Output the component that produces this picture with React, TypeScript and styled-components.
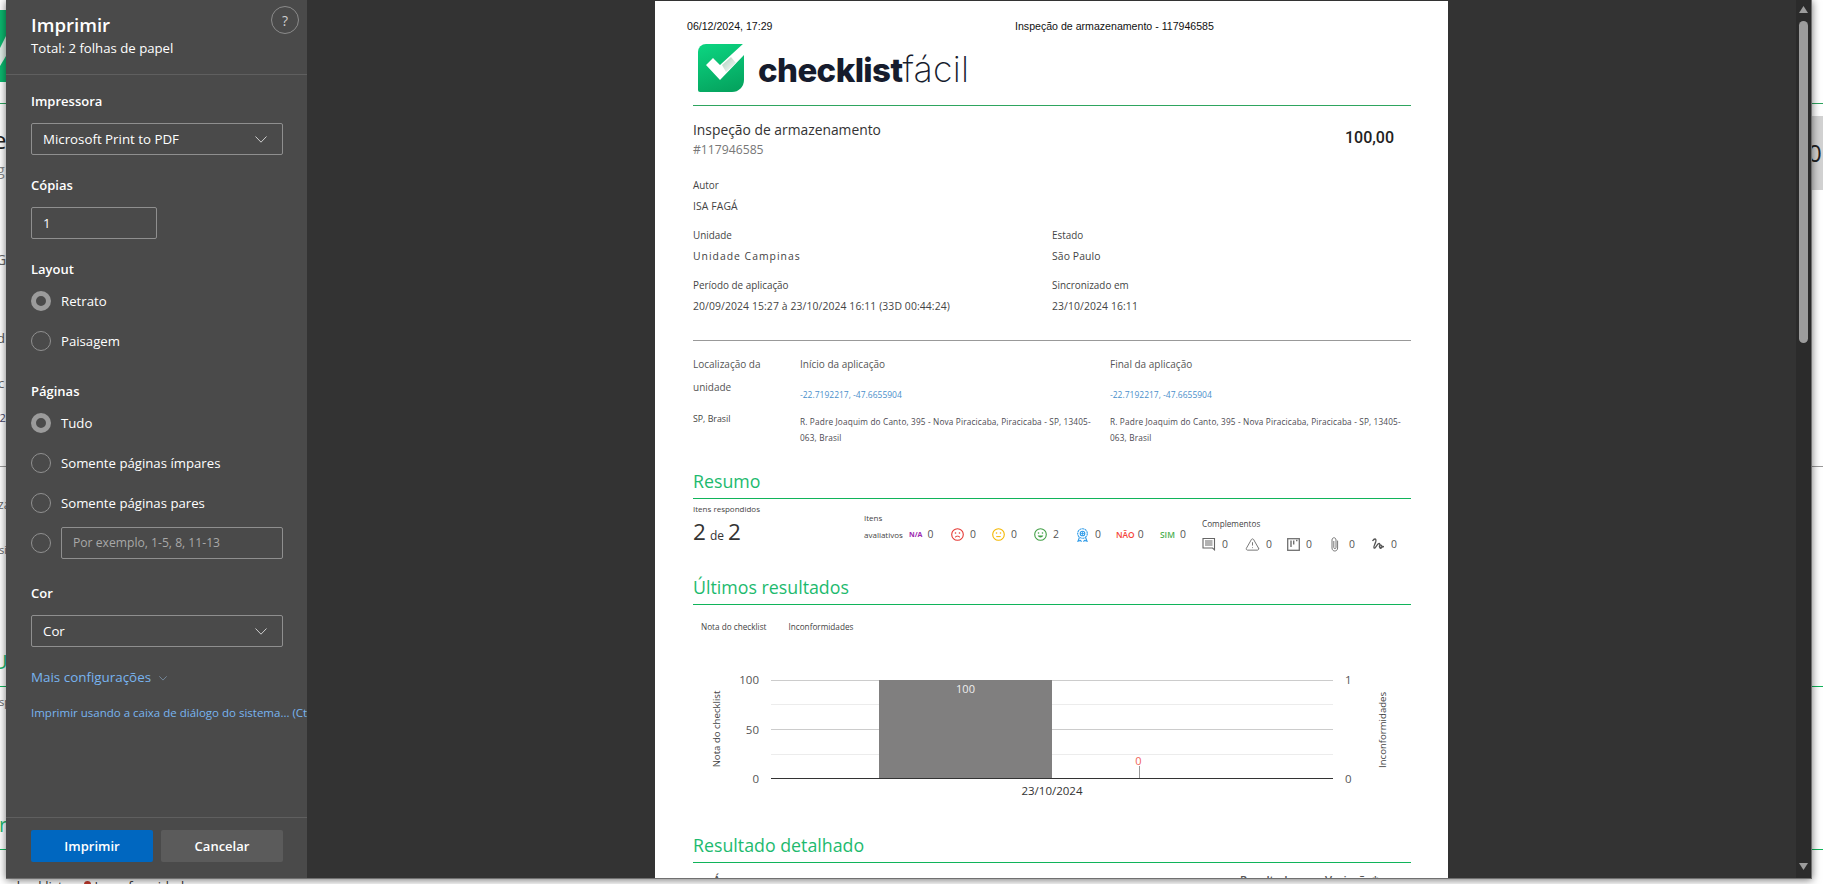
import React from "react";
import styled, { createGlobalStyle } from "styled-components";
import { TriangleAlert } from "lucide-react";

const Global = createGlobalStyle`
  html, body { margin: 0; padding: 0; background: #fff; overflow: hidden; }
  * { box-sizing: border-box; }
`;

const Root = styled.div`
  position: relative;
  width: 1823px;
  height: 884px;
  overflow: hidden;
  background: #fff;
  font-family: "Open Sans", "Liberation Sans", sans-serif;
`;

/* page behind the modal */
const BackTop = styled.div`
  display: flex;
  justify-content: space-between;
  height: 878px;
`;
const BackLeft = styled.div`
  width: 6px;
  overflow: hidden;
`;
const BackRight = styled.div`
  width: 11px;
  overflow: hidden;
`;
const BackRule = styled.div<{ $mt: number; $c: string }>`
  height: 1px;
  margin-top: ${(p) => p.$mt}px;
  background: ${(p) => p.$c};
`;
const Scrap = styled.div<{ $mt: number; $lh: number; $size: number; $c: string; $indent: number }>`
  margin-top: ${(p) => p.$mt}px;
  height: ${(p) => p.$lh}px;
  line-height: ${(p) => p.$lh}px;
  font-size: ${(p) => p.$size}px;
  color: ${(p) => p.$c};
  text-indent: ${(p) => p.$indent}px;
  white-space: nowrap;
`;
const LogoBit = styled.svg`
  display: block;
  margin-top: 10px;
`;
const GrayCard = styled.div`
  margin-top: 12px;
  height: 74px;
  background: #d2d2d2;
  color: #222;
  font-size: 24px;
  line-height: 74px;
  text-indent: -4px;
  white-space: nowrap;
`;
const BackBottom = styled.div`
  display: flex;
  align-items: flex-start;
  height: 6px;
  overflow: hidden;
  font-size: 13px;
  line-height: 16px;
  color: #333;
  white-space: nowrap;
`;
const BackLegendLead = styled.span`
  margin-left: -8px;
`;
const BackLegendDot = styled.span`
  width: 7px;
  height: 7px;
  border-radius: 50%;
  background: #c0392b;
  margin: 3px 4px 0 21px;
`;

/* dialog */
const Dialog = styled.div`
  position: absolute;
  left: 6px;
  top: 0;
  width: 1806px;
  height: 879px;
  display: flex;
  border-right: 1px solid #707070;
  border-bottom: 1px solid #707070;
  box-shadow: 0 1px 8px rgba(0, 0, 0, 0.55);
  color: #fff;
`;
const Sidebar = styled.aside`
  width: 301px;
  flex: none;
  display: flex;
  flex-direction: column;
  background: #4a4a4a;
  font-size: 13.2px;
  overflow: hidden;
`;
const SideHeader = styled.header`
  height: 75px;
  flex: none;
  display: flex;
  justify-content: space-between;
  align-items: flex-start;
  padding: 6px 8px 0 25px;
  border-bottom: 1px solid #5f5f5f;
`;
const SideTitle = styled.h1`
  margin: 5px 0 0;
  font-size: 18.6px;
  line-height: 28px;
  font-weight: 600;
`;
const SideSub = styled.div`
  margin-top: -1px;
  font-size: 13.2px;
  line-height: 20px;
`;
const HelpBtn = styled.div`
  width: 28px;
  height: 28px;
  border-radius: 50%;
  border: 1px solid #8b8b8b;
  display: flex;
  align-items: center;
  justify-content: center;
  color: #cfcfcf;
  font-size: 14px;
`;
const SideBody = styled.div`
  flex: 1;
  display: flex;
  flex-direction: column;
  padding: 0 24px 0 25px;
`;
const GroupLabel = styled.div<{ $mt: number }>`
  margin-top: ${(p) => p.$mt}px;
  font-weight: 600;
  font-size: 13px;
  line-height: 20px;
`;
const Select = styled.div`
  margin-top: 12px;
  height: 32px;
  border: 1px solid #8f8f8f;
  border-radius: 2px;
  display: flex;
  align-items: center;
  justify-content: space-between;
  padding: 0 15px 0 11px;
  line-height: 30px;
  font-size: 13.3px;
`;
const CopyBox = styled.div`
  margin-top: 12px;
  width: 126px;
  height: 32px;
  border: 1px solid #8f8f8f;
  border-radius: 2px;
  padding-left: 11px;
  line-height: 30px;
`;
const RadioRow = styled.div<{ $mt?: number }>`
  height: 40px;
  margin-top: ${(p) => p.$mt ?? 0}px;
  display: flex;
  align-items: center;
  gap: 10px;
`;
const Radio = styled.span<{ $on?: boolean }>`
  width: 20px;
  height: 20px;
  flex: none;
  border-radius: 50%;
  border: ${(p) => (p.$on ? "5px solid #9b9b9b" : "1px solid #909090")};
`;
const RangeBox = styled.div`
  flex: 1;
  height: 32px;
  border: 1px solid #8f8f8f;
  border-radius: 2px;
  padding-left: 11px;
  line-height: 30px;
  font-size: 12.15px;
  color: #a8a8a8;
`;
const MoreLink = styled.div`
  margin-top: 20px;
  height: 20px;
  display: flex;
  align-items: center;
  gap: 8px;
  color: #78b4f0;
  line-height: 20px;
  font-size: 13.4px;
`;
const MoreChevron = styled.span`
  display: flex;
  margin-top: 3px;
`;
const SysLink = styled.div`
  margin-top: 16px;
  margin-right: -24px;
  line-height: 20px;
  font-size: 11.5px;
  color: #78b4f0;
  white-space: nowrap;
`;
const SideFooter = styled.footer`
  height: 61px;
  flex: none;
  display: flex;
  gap: 8px;
  padding: 12px 24px 0 25px;
  border-top: 1px solid #5f5f5f;
`;
const Btn = styled.div<{ $primary?: boolean }>`
  width: 122px;
  height: 32px;
  border-radius: 2px;
  background: ${(p) => (p.$primary ? "#0067c0" : "#5b5b5b")};
  display: flex;
  align-items: center;
  justify-content: center;
  font-weight: 600;
  font-size: 13px;
`;

const Preview = styled.main`
  width: 1489px;
  flex: none;
  background: #333;
  display: flex;
  justify-content: center;
  overflow: hidden;
`;
const Scrollbar = styled.div`
  flex: 1;
  background: #2b2b2b;
  display: flex;
  flex-direction: column;
  align-items: center;
  padding: 6px 0;
`;
const ScrollThumb = styled.div`
  width: 9px;
  height: 322px;
  margin-top: 8px;
  border-radius: 5px;
  background: #9c9c9c;
`;
const ScrollArrowDown = styled.svg`
  margin-top: auto;
  margin-bottom: 2px;
`;

/* printed sheet */
const Paper = styled.article`
  width: 793px;
  height: 877px;
  margin-top: 1px;
  padding: 0 37px 0 38px;
  background: #fff;
  color: #333;
  overflow: hidden;
  font-family: "Open Sans", "Liberation Sans", sans-serif;
`;
const PrintHeader = styled.div`
  margin: 18px 0 0 -6px;
  height: 14px;
  display: grid;
  grid-template-columns: 328px 1fr;
  font-family: "Liberation Sans", Arial, sans-serif;
  font-size: 10.6px;
  line-height: 14px;
  color: #111;
`;
const LogoRow = styled.div`
  margin: 11px 0 0 5px;
  height: 48px;
  display: flex;
  align-items: center;
  gap: 14px;
`;
const LogoWord = styled.div`
  font-family: Inter, "Open Sans", sans-serif;
  font-size: 33px;
  line-height: 48px;
  letter-spacing: -0.6px;
  color: #161c2d;
  font-weight: 800;
  padding-top: 2px;
  span {
    font-size: 35.8px;
    font-weight: 200;
    letter-spacing: 0.2px;
  }
`;
const Rule = styled.div<{ $mt: number; $c: string }>`
  height: 1px;
  margin-top: ${(p) => p.$mt}px;
  background: ${(p) => p.$c};
`;
const TitleRow = styled.div`
  margin-top: 14px;
  height: 39px;
  display: flex;
  justify-content: space-between;
  padding-right: 17px;
`;
const DocTitle = styled.div`
  font-size: 13.85px;
  line-height: 20px;
  color: #333;
`;
const DocId = styled.div`
  margin-top: 1px;
  font-size: 12.2px;
  line-height: 18px;
  color: #777;
`;
const Score = styled.div`
  margin-top: 8px;
  font-family: Roboto, Arial, sans-serif;
  font-size: 16px;
  font-weight: 500;
  line-height: 20px;
  color: #222;
`;
const Fields = styled.div`
  margin-top: 18px;
  display: grid;
  grid-template-columns: 359px 1fr;
  row-gap: 13px;
`;
const Field = styled.div<{ $full?: boolean }>`
  grid-column: ${(p) => (p.$full ? "1 / -1" : "auto")};
  display: flex;
  flex-direction: column;
  gap: 5px;
  font-size: 9.9px;
  line-height: 16px;
  color: #444;
`;
const FieldValue = styled.span<{ $track?: number }>`
  font-size: 10.4px;
  letter-spacing: ${(p) => p.$track ?? 0.1}px;
`;
const LocGrid = styled.div`
  margin-top: 12px;
  height: 93px;
  display: grid;
  grid-template-columns: 107px 310px 1fr;
`;
const LocHead = styled.div`
  font-size: 10px;
  line-height: 23px;
  color: #555;
`;
const LocSmall = styled.div`
  margin-top: 14px;
  font-size: 8.8px;
  line-height: 12px;
  color: #444;
`;
const Coord = styled.div`
  margin-top: 13px;
  font-size: 8.5px;
  line-height: 12px;
  color: #4a8fcb;
`;
const Addr = styled.div`
  margin-top: 13px;
  width: 300px;
  font-size: 8.25px;
  line-height: 16px;
  letter-spacing: 0.15px;
  color: #4c4a52;
`;
const SectionTitle = styled.h2<{ $mt: number }>`
  margin: ${(p) => p.$mt}px 0 0;
  height: 31px;
  padding-bottom: 4px;
  font-size: 17.8px;
  font-weight: 400;
  line-height: 26px;
  color: #1dba6e;
  border-bottom: 1px solid #10b45a;
`;
const SummaryRow = styled.div`
  height: 75px;
  display: grid;
  grid-template-columns: 171px 338px 1fr;
`;
const Tiny = styled.div<{ $mt?: number }>`
  margin-top: ${(p) => p.$mt ?? 0}px;
  font-size: 8px;
  line-height: 12px;
  color: #444;
`;
const Counts = styled.div`
  margin-top: 2px;
  height: 30px;
  line-height: 30px;
  font-size: 12px;
  color: #333;
  b {
    font-weight: 400;
    font-size: 22.5px;
  }
  span {
    margin: 0 4px;
  }
`;
const EvalCol = styled.div`
  padding-top: 11px;
  font-size: 8px;
  line-height: 15px;
  color: #444;
`;
const EvalLine = styled.div`
  display: flex;
  align-items: center;
  height: 15px;
  margin-top: 2px;
`;
const EvalLabel = styled.span`
  width: 45px;
  flex: none;
`;
const Metric = styled.div<{ $w: number; $gap?: number }>`
  width: ${(p) => p.$w}px;
  flex: none;
  display: flex;
  align-items: center;
  gap: ${(p) => p.$gap ?? 6}px;
  font-size: 10.4px;
  color: #555;
`;
const Badge = styled.span<{ $c: string; $size: number; $weight?: number }>`
  color: ${(p) => p.$c};
  font-size: ${(p) => p.$size}px;
  font-weight: ${(p) => p.$weight ?? 600};
  line-height: 15px;
`;
const CompTitle = styled(Tiny)`
  font-size: 8.2px;
  margin-top: 19px;
`;
const CompRow = styled.div`
  margin-top: 5px;
  height: 18px;
  display: flex;
  align-items: center;
`;
const Legend = styled.div`
  margin-top: 16px;
  padding-left: 8px;
  display: flex;
  gap: 22px;
  font-size: 8.2px;
  line-height: 12px;
  color: #444;
`;
const Chart = styled.svg`
  display: block;
`;
const TableHead = styled.div`
  margin-top: 9px;
  padding-left: 20px;
  display: flex;
  font-size: 11.3px;
  font-weight: 600;
  line-height: 16px;
  color: #555;
`;
const HeadResult = styled.span`
  margin-left: auto;
  width: 85px;
`;
const HeadVar = styled.span`
  width: 86px;
`;

const Chevron = ({ w = 12, c = "#cfcfcf" }: { w?: number; c?: string }) => (
  <svg width={w} height={(w * 7) / 12} viewBox="0 0 12 7" fill="none">
    <path d="M0.5 0.5L6 6.2L11.5 0.5" stroke={c} strokeWidth="1" />
  </svg>
);

const Logo = () => (
  <svg width="46" height="48" viewBox="0 0 46 48">
    <defs>
      <linearGradient id="lg" x1="0.3" y1="0" x2="0.6" y2="1">
        <stop offset="0" stopColor="#0bd27f" />
        <stop offset="1" stopColor="#05a45f" />
      </linearGradient>
      <linearGradient id="ls" x1="0" y1="0" x2="1" y2="1">
        <stop offset="0" stopColor="#a9cdb9" />
        <stop offset="1" stopColor="#ffffff" />
      </linearGradient>
    </defs>
    <path d="M8 0H46V36A12 12 0 0 1 34 48H2A2 2 0 0 1 0 46V8A8 8 0 0 1 8 0Z" fill="url(#lg)" />
    <polygon points="8,21 15,14 22,21 46,-1 46,11 22,36" fill="#fff" />
    <polygon points="24,21 33,13 38,19 28,28" fill="url(#ls)" />
  </svg>
);

const Face = ({ c, kind }: { c: string; kind: "sad" | "meh" | "happy" }) => (
  <svg width="13" height="13" viewBox="0 0 13 13" fill="none">
    <circle cx="6.5" cy="6.5" r="5.8" stroke={c} strokeWidth="1.1" />
    <circle cx="4.5" cy="5" r="0.8" fill={c} />
    <circle cx="8.5" cy="5" r="0.8" fill={c} />
    {kind === "sad" && <path d="M4 9.3C5 7.8 8 7.8 9 9.3" stroke={c} strokeWidth="1" />}
    {kind === "meh" && <path d="M4.3 8.6H8.7" stroke={c} strokeWidth="1" />}
    {kind === "happy" && <path d="M3.7 7.6H9.3C9 10 4 10 3.7 7.6Z" fill={c} />}
  </svg>
);

const Medal = () => (
  <svg width="13" height="14" viewBox="0 0 13 14" fill="none" stroke="#2f9be8" strokeWidth="1.1">
    <circle cx="6.5" cy="5.5" r="4.8" strokeDasharray="2.2 0.5" />
    <circle cx="6.5" cy="5.5" r="2.3" />
    <path d="M3.4 9.5L2 13.2L4.4 12.4L5.6 13.6M9.6 9.5L11 13.2L8.6 12.4L7.4 13.6" />
    <path d="M6.5 3.5V7.5M4.5 5.5H8.5" strokeWidth="0.8" />
  </svg>
);

const CommentIcon = () => (
  <svg width="14" height="14" viewBox="0 0 14 14" fill="none" stroke="#666" strokeWidth="1.1">
    <path d="M1 1.5H12.5V12.8L10.6 11H1Z" />
    <path d="M3 4H10.5M3 6H10.5M3 8H10.5" />
  </svg>
);

const KanbanIcon = () => (
  <svg width="13" height="13" viewBox="0 0 13 13" fill="none" stroke="#707070">
    <rect x="0.7" y="0.7" width="11.6" height="11.6" strokeWidth="1.3" />
    <path d="M4 2.5V9M6.7 2.5V6.5" strokeWidth="1.4" />
    <path d="M9 2.5H10.5" strokeWidth="1.4" />
  </svg>
);

const ClipIcon = () => (
  <svg width="10" height="15" viewBox="0 0 10 15" fill="none" stroke="#777" strokeWidth="1">
    <path d="M7.6 3.6V11C7.6 15 2 15 2 11V3C2 0 6 0 6 3V10.5C6 12 3.8 12 3.8 10.5V4" />
  </svg>
);

const SignIcon = () => (
  <svg width="14" height="14" viewBox="0 0 14 14" fill="none" stroke="#555" strokeWidth="1.3">
    <path d="M1.5 4C3.5 1 5.5 1.5 4.8 4.5C4 7.5 2 10 3 11C4.5 12 6 6.5 8 6.5C10 6.5 7.5 11 9.3 11.3C11 11.5 11.5 8.5 10 8.2C8.5 8 7.5 10 9.5 10.3C11 10.5 12 9.5 13 9.5" />
  </svg>
);

const Row = ({ on, children, mt }: { on?: boolean; children: React.ReactNode; mt?: number }) => (
  <RadioRow $mt={mt}>
    <Radio $on={on} />
    {children}
  </RadioRow>
);

const axisFont = { fontFamily: '"Open Sans", sans-serif' };

const ChartDrawing = () => (
  <Chart width="718" height="199" viewBox="0 0 718 199">
    <g style={axisFont}>
      <line x1="78" x2="640" y1="47.5" y2="47.5" stroke="#ccc" />
      <line x1="78" x2="640" y1="71.5" y2="71.5" stroke="#ececec" />
      <line x1="78" x2="640" y1="96.5" y2="96.5" stroke="#ccc" />
      <line x1="78" x2="640" y1="121.5" y2="121.5" stroke="#ececec" />
      <rect x="186" y="47" width="173" height="98" fill="#807f7f" />
      <line x1="78" x2="640" y1="145.5" y2="145.5" stroke="#333" />
      <line x1="446.5" x2="446.5" y1="133" y2="145" stroke="#999" />
      <text x="272.5" y="60" textAnchor="middle" fontSize="11" fill="#eee">100</text>
      <text x="445.5" y="132" textAnchor="middle" fontSize="11" fill="#f0645a">0</text>
      <g fontSize="11.5" fill="#555">
        <text x="66" y="51" textAnchor="end">100</text>
        <text x="66" y="101" textAnchor="end">50</text>
        <text x="66" y="150" textAnchor="end">0</text>
        <text x="652" y="51">1</text>
        <text x="652" y="150">0</text>
      </g>
      <text x="359" y="162" textAnchor="middle" fontSize="11.5" fill="#333">23/10/2024</text>
      <text transform="translate(27 96) rotate(-90)" textAnchor="middle" fontSize="9.6" fill="#444">Nota do checklist</text>
      <text transform="translate(693 97) rotate(-90)" textAnchor="middle" fontSize="9.6" fill="#444">Inconformidades</text>
    </g>
  </Chart>
);

export default function App() {
  return (
    <Root>
      <Global />
      <BackTop>
        <BackLeft>
          <LogoBit width="6" height="72" viewBox="0 0 6 72">
            <rect width="6" height="72" fill="#0bb86e" />
            <polygon points="0,38 6,26 6,46 0,56" fill="#dfeee6" />
          </LogoBit>
          <BackRule $mt={21} $c="#2ea55f" />
          <Scrap $mt={24} $lh={24} $size={24} $c="#222" $indent={-7}>e</Scrap>
          <Scrap $mt={10} $lh={16} $size={14} $c="#888" $indent={-3}>g</Scrap>
          <Scrap $mt={74} $lh={16} $size={14} $c="#666" $indent={-4}>G</Scrap>
          <Scrap $mt={62} $lh={16} $size={13} $c="#555" $indent={-3}>d</Scrap>
          <Scrap $mt={29} $lh={16} $size={13} $c="#666" $indent={-2}>c</Scrap>
          <Scrap $mt={19} $lh={16} $size={11} $c="#446" $indent={-3}>'2</Scrap>
          <BackRule $mt={40} $c="#999" />
          <Scrap $mt={30} $lh={16} $size={12} $c="#666" $indent={-2}>za</Scrap>
          <Scrap $mt={29} $lh={16} $size={11} $c="#666" $indent={-1}>si</Scrap>
          <Scrap $mt={92} $lh={24} $size={20} $c="#1dba6e" $indent={-7}>U</Scrap>
          <BackRule $mt={12} $c="#10b45a" />
          <Scrap $mt={7} $lh={16} $size={11} $c="#666" $indent={-1}>sp</Scrap>
          <Scrap $mt={103} $lh={24} $size={20} $c="#1dba6e" $indent={-1}>r</Scrap>
          <BackRule $mt={12} $c="#10b45a" />
        </BackLeft>
        <BackRight>
          <BackRule $mt={103} $c="#2ea55f" />
          <GrayCard>0</GrayCard>
          <BackRule $mt={276} $c="#999" />
          <BackRule $mt={219} $c="#10b45a" />
          <BackRule $mt={162} $c="#10b45a" />
        </BackRight>
      </BackTop>
      <BackBottom>
        <BackLegendLead>de checklist</BackLegendLead>
        <BackLegendDot />
        <span>Inconformidades</span>
      </BackBottom>

      <Dialog>
        <Sidebar>
          <SideHeader>
            <div>
              <SideTitle>Imprimir</SideTitle>
              <SideSub>Total: 2 folhas de papel</SideSub>
            </div>
            <HelpBtn>?</HelpBtn>
          </SideHeader>
          <SideBody>
            <GroupLabel $mt={16}>Impressora</GroupLabel>
            <Select>
              <span>Microsoft Print to PDF</span>
              <Chevron />
            </Select>
            <GroupLabel $mt={20}>Cópias</GroupLabel>
            <CopyBox>1</CopyBox>
            <GroupLabel $mt={20}>Layout</GroupLabel>
            <Row on mt={2}>Retrato</Row>
            <Row>Paisagem</Row>
            <GroupLabel $mt={20}>Páginas</GroupLabel>
            <Row on mt={2}>Tudo</Row>
            <Row>Somente páginas ímpares</Row>
            <Row>Somente páginas pares</Row>
            <Row>
              <RangeBox>Por exemplo, 1-5, 8, 11-13</RangeBox>
            </Row>
            <GroupLabel $mt={20}>Cor</GroupLabel>
            <Select>
              <span>Cor</span>
              <Chevron />
            </Select>
            <MoreLink>
              <span>Mais configurações</span>
              <MoreChevron>
                <Chevron w={8} c="#8aa4c0" />
              </MoreChevron>
            </MoreLink>
            <SysLink>Imprimir usando a caixa de diálogo do sistema... (Ctrl+Shift+P)</SysLink>
          </SideBody>
          <SideFooter>
            <Btn $primary>Imprimir</Btn>
            <Btn>Cancelar</Btn>
          </SideFooter>
        </Sidebar>

        <Preview>
          <Paper>
            <PrintHeader>
              <span>06/12/2024, 17:29</span>
              <span>Inspeção de armazenamento - 117946585</span>
            </PrintHeader>
            <LogoRow>
              <Logo />
              <LogoWord>
                checklist<span>fácil</span>
              </LogoWord>
            </LogoRow>
            <Rule $mt={13} $c="#2ea55f" />

            <TitleRow>
              <div>
                <DocTitle>Inspeção de armazenamento</DocTitle>
                <DocId>#117946585</DocId>
              </div>
              <Score>100,00</Score>
            </TitleRow>

            <Fields>
              <Field $full>
                <span>Autor</span>
                <FieldValue>ISA FAGÁ</FieldValue>
              </Field>
              <Field>
                <span>Unidade</span>
                <FieldValue $track={1}>Unidade Campinas</FieldValue>
              </Field>
              <Field>
                <span>Estado</span>
                <FieldValue>São Paulo</FieldValue>
              </Field>
              <Field>
                <span>Período de aplicação</span>
                <FieldValue>20/09/2024 15:27 à 23/10/2024 16:11 (33D 00:44:24)</FieldValue>
              </Field>
              <Field>
                <span>Sincronizado em</span>
                <FieldValue>23/10/2024 16:11</FieldValue>
              </Field>
            </Fields>
            <Rule $mt={26} $c="#999" />

            <LocGrid>
              <div>
                <LocHead>Localização da<br />unidade</LocHead>
                <LocSmall>SP, Brasil</LocSmall>
              </div>
              <div>
                <LocHead>Início da aplicação</LocHead>
                <Coord>-22.7192217, -47.6655904</Coord>
                <Addr>R. Padre Joaquim do Canto, 395 - Nova Piracicaba, Piracicaba - SP, 13405-063, Brasil</Addr>
              </div>
              <div>
                <LocHead>Final da aplicação</LocHead>
                <Coord>-22.7192217, -47.6655904</Coord>
                <Addr>R. Padre Joaquim do Canto, 395 - Nova Piracicaba, Piracicaba - SP, 13405-063, Brasil</Addr>
              </div>
            </LocGrid>

            <SectionTitle $mt={22}>Resumo</SectionTitle>
            <SummaryRow>
              <div>
                <Tiny $mt={4}>Itens respondidos</Tiny>
                <Counts>
                  <b>2</b>
                  <span>de</span>
                  <b>2</b>
                </Counts>
              </div>
              <EvalCol>
                <div>Itens</div>
                <EvalLine>
                  <EvalLabel>avaliativos</EvalLabel>
                  <Metric $w={42} $gap={5}><Badge $c="#9c27b0" $size={7} $weight={700}>N/A</Badge>0</Metric>
                  <Metric $w={41}><Face c="#e53935" kind="sad" />0</Metric>
                  <Metric $w={42}><Face c="#f5b800" kind="meh" />0</Metric>
                  <Metric $w={42}><Face c="#43a047" kind="happy" />2</Metric>
                  <Metric $w={40}><Medal />0</Metric>
                  <Metric $w={44} $gap={3}><Badge $c="#f44336" $size={8.4}>NÃO</Badge>0</Metric>
                  <Metric $w={40} $gap={5}><Badge $c="#4caf50" $size={8.4}>SIM</Badge>0</Metric>
                </EvalLine>
              </EvalCol>
              <div>
                <CompTitle>Complementos</CompTitle>
                <CompRow>
                  <Metric $w={43}><CommentIcon />0</Metric>
                  <Metric $w={42}><TriangleAlert size={15} color="#666" strokeWidth={1.4} />0</Metric>
                  <Metric $w={43}><KanbanIcon />0</Metric>
                  <Metric $w={41} $gap={9}><ClipIcon />0</Metric>
                  <Metric $w={40}><SignIcon />0</Metric>
                </CompRow>
              </div>
            </SummaryRow>

            <SectionTitle $mt={0}>Últimos resultados</SectionTitle>
            <Legend>
              <span>Nota do checklist</span>
              <span>Inconformidades</span>
            </Legend>
            <ChartDrawing />

            <SectionTitle $mt={0}>Resultado detalhado</SectionTitle>
            <TableHead>
              <span>Área</span>
              <HeadResult>Resultado</HeadResult>
              <HeadVar>Variação*</HeadVar>
            </TableHead>
          </Paper>
        </Preview>

        <Scrollbar>
          <svg width="9" height="7" viewBox="0 0 9 7"><polygon points="4.5,0 9,7 0,7" fill="#9c9c9c" /></svg>
          <ScrollThumb />
          <ScrollArrowDown width="9" height="7" viewBox="0 0 9 7"><polygon points="0,0 9,0 4.5,7" fill="#9c9c9c" /></ScrollArrowDown>
        </Scrollbar>
      </Dialog>
    </Root>
  );
}
